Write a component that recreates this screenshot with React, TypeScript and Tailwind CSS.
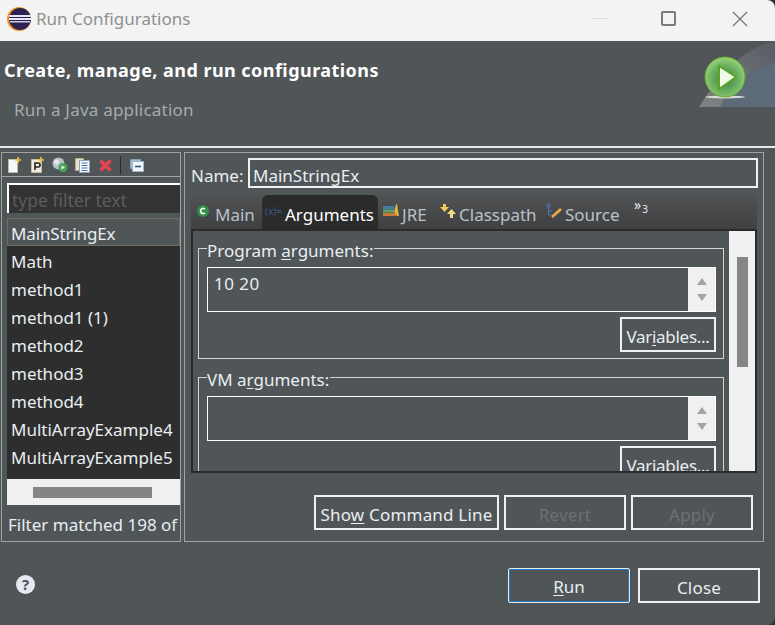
const font = { fontFamily: '"Noto Sans", sans-serif' };

const configs = [
  "Math",
  "method1",
  "method1 (1)",
  "method2",
  "method3",
  "method4",
  "MultiArrayExample4",
  "MultiArrayExample5",
  "MultiCatchExample",
];

function EclipseLogo() {
  return (
    <svg width="24" height="24" viewBox="0 0 24 24">
      <circle cx="12" cy="12" r="12" fill="#f7941e" />
      <circle cx="13" cy="12" r="11" fill="#2c2255" />
      <rect x="2" y="8" width="22" height="2" fill="#e8e6f2" />
      <rect x="2" y="11" width="22" height="2" fill="#e8e6f2" />
      <rect x="3" y="14" width="20" height="1.5" fill="#cfcbe4" />
    </svg>
  );
}

function PlayBanner() {
  return (
    <svg width="76" height="66" viewBox="0 0 76 66" className="block">
      <defs>
        <radialGradient id="ball" cx="0.5" cy="0.55" r="0.6">
          <stop offset="0" stopColor="#3f7a4a" />
          <stop offset="0.6" stopColor="#6fb463" />
          <stop offset="1" stopColor="#a6dc82" />
        </radialGradient>
        <linearGradient id="swoosh" x1="0" y1="1" x2="1" y2="0">
          <stop offset="0" stopColor="#7f8385" />
          <stop offset="1" stopColor="#565c62" />
        </linearGradient>
      </defs>
      <path d="M0 66 C16 42 36 10 76 0 V66 Z" fill="url(#swoosh)" />
      <path d="M21 66 C32 42 52 27 76 22 V66 Z" fill="#5d6a78" />
      <ellipse cx="26" cy="56" rx="20" ry="1.5" fill="#d8dcd8" />
      <circle cx="26" cy="36" r="20" fill="url(#ball)" stroke="#6aa82e" strokeWidth="1" />
      <path d="M20 25 L37 36 L20 48 Z" fill="#f2fbea" stroke="#5aa525" strokeWidth="2" />
    </svg>
  );
}

function ToolIcons() {
  return (
    <div className="flex items-center h-[24px] pl-[6px]">
      <svg width="13" height="16" viewBox="0 0 13 16">
        <path d="M0.5 2.5H9.5V15.5H0.5Z" fill="#f4f7fb" stroke="#c2bda5" />
        <path d="M10 0V6M7 3H13" stroke="#eec64a" strokeWidth="1.6" />
      </svg>
      <svg width="14" height="16" viewBox="0 0 14 16" className="ml-[10px]">
        <path d="M0.5 2.5H10.5V15.5H0.5Z" fill="#f0ede0" stroke="#c2bda5" />
        <path d="M4 13V6H7.5Q9 6 9 8T7.5 10H4" fill="none" stroke="#222" strokeWidth="1.6" />
        <path d="M10 0V6M7 3H13" stroke="#eec64a" strokeWidth="1.6" />
      </svg>
      <svg width="16" height="16" viewBox="0 0 16 16" className="ml-[7px]">
        <circle cx="6.5" cy="6.5" r="6" fill="#b8c0c8" />
        <circle cx="4.5" cy="5" r="2.5" fill="#e4e8ec" />
        <path d="M0 12L4 15" stroke="#3d5f8a" strokeWidth="1.6" />
        <circle cx="11" cy="10.5" r="4.5" fill="#4ba35a" />
        <path d="M9.5 8.5L13 10.5L9.5 12.5Z" fill="#e6f5e6" />
      </svg>
      <svg width="15" height="15" viewBox="0 0 15 15" className="ml-[7px]">
        <path d="M0.5 0.5H8.5V12.5H0.5Z" fill="#e8e3cc" stroke="#b6ad86" />
        <path d="M4.5 2.5H14.5V14.5H4.5Z" fill="#f4f7fb" stroke="#8fa0b8" />
        <path d="M6.5 5H12.5M6.5 7.5H12.5M6.5 10H12.5M6.5 12.5H12.5" stroke="#4f74ac" />
      </svg>
      <svg width="13" height="13" viewBox="0 0 13 13" className="ml-[9px]">
        <path d="M1.5 1.5L11.5 11.5M11.5 1.5L1.5 11.5" stroke="#e6434d" strokeWidth="3.6" />
      </svg>
      <div className="ml-[8px] h-[18px] w-[1px] bg-[#2a2a2a]" />
      <svg width="14" height="13" viewBox="0 0 14 13" className="ml-[9px]">
        <path d="M0.5 0.5H10.5V9.5H0.5Z" fill="#9cc0d8" stroke="#8aa0b0" />
        <path d="M2.5 2.5H13.5V12.5H2.5Z" fill="#f1f6fa" stroke="#9fb7c8" />
        <path d="M5 7.5H11" stroke="#27577d" strokeWidth="1.6" />
      </svg>
    </div>
  );
}

function SpinArrows() {
  return (
    <div className="w-[27px] shrink-0 bg-[#f0f0f0] flex flex-col items-center justify-center gap-[9px]">
      <svg width="10" height="7" viewBox="0 0 10 7">
        <path d="M5 0L10 7H0Z" fill="#a3a3a3" />
      </svg>
      <svg width="10" height="7" viewBox="0 0 10 7">
        <path d="M5 7L10 0H0Z" fill="#a3a3a3" />
      </svg>
    </div>
  );
}

function ActionButton({
  width,
  disabled,
  children,
}: {
  width: string;
  disabled?: boolean;
  children: React.ReactNode;
}) {
  return (
    <div
      className={`${width} h-[35px] shrink-0 border-2 border-[#f0f0f0] flex items-center justify-center pt-[4px] text-[17px] tracking-[0.2px] ${
        disabled ? "text-[#6d7072]" : "text-[#e8eef2]"
      }`}
    >
      {children}
    </div>
  );
}

function ArgumentGroup({
  legend,
  value,
  className,
}: {
  legend: React.ReactNode;
  value?: string;
  className: string;
}) {
  return (
    <fieldset className={`border border-[#d4d6d6] mx-[5px] pl-[8px] pr-[7px] ${className}`}>
      <legend className="pt-[6px] pr-[1px] text-[17px] leading-[18px] text-[#e8eef2]">{legend}</legend>
      <div className="flex h-[45px] mt-[7px] border border-white">
        <div className="flex-1 px-[6px] text-[17px] tracking-[0.5px] leading-[32px] text-[#e8eef2]">{value}</div>
        <SpinArrows />
      </div>
      <div className="flex justify-end mt-[5px] mb-[6px]">
        <ActionButton width="w-[96px]">
          <span className="tracking-[-0.3px]">
            Var<span className="underline underline-offset-2">i</span>ables...
          </span>
        </ActionButton>
      </div>
    </fieldset>
  );
}

function TabLabel({
  icon,
  label,
  className,
  active,
}: {
  icon: React.ReactNode;
  label: string;
  className: string;
  active?: boolean;
}) {
  return (
    <div
      className={`h-[34px] flex items-center gap-[3px] text-[17px] whitespace-nowrap ${className} ${
        active ? "bg-[#2b2b2b] text-white rounded-t-[6px]" : "text-[#b9c2c8]"
      }`}
    >
      {icon}
      <span className="mt-[6px]">{label}</span>
    </div>
  );
}

export default function App() {
  return (
    <div className="w-[775px] h-[625px] overflow-hidden bg-[#2e3032]" style={font}>
      <div className="h-[41px] bg-[#f3f3f3] rounded-tr-[8px] flex items-center pl-[7px] pb-[4px]">
        <EclipseLogo />
        <span className="ml-[5px] text-[17px] text-[#8f8f8f]">Run Configurations</span>
        <div className="ml-auto flex items-center">
          <div className="w-[15px] h-[1px] bg-[#dcdcdc]" />
          <div className="ml-[54px] w-[15px] h-[15px] border-2 border-[#7a7a7a] rounded-[2px]" />
          <svg width="16" height="16" viewBox="0 0 16 16" className="ml-[56px] mr-[27px]">
            <path d="M1 1L15 15M15 1L1 15" stroke="#777" strokeWidth="1.3" />
          </svg>
        </div>
      </div>

      <div className="h-[584px] bg-[#505558] rounded-br-[8px] flex flex-col">
        <div className="h-[105px] flex justify-between shrink-0">
          <div>
            <div className="mt-[17px] ml-[4px] text-[18px] tracking-[0.45px] leading-[24px] font-bold text-white">
              Create, manage, and run configurations
            </div>
            <div className="mt-[16px] ml-[14px] text-[17px] tracking-[0.22px] leading-[24px] text-[#a6abad]">
              Run a Java application
            </div>
          </div>
          <PlayBanner />
        </div>

        <div className="h-[2px] bg-[#e6e7e7] shrink-0" />

        <div className="flex mt-[4px] h-[390px] shrink-0">
          <aside className="ml-[1px] w-[180px] shrink-0 border border-[#a0a3a4] flex flex-col overflow-hidden">
            <div className="h-[24px] border-b border-[#a0a3a4] shrink-0">
              <ToolIcons />
            </div>
            <div className="ml-[5px] mt-[6px] h-[30px] shrink-0 bg-[#333333] border-t-2 border-l-2 border-white pl-[3px] text-[17.5px] leading-[30px] text-[#5c5c5c] whitespace-nowrap">
              type filter text
            </div>
            <div className="ml-[5px] mt-[5px] h-[261px] shrink-0 bg-[#2e2e2e] overflow-hidden text-[17px] text-[#e8eef2]">
              <div className="h-[28px] bg-[#505558] border border-[#6e6e62] leading-[30px] pl-[3px] tracking-[-0.15px]">MainStringEx</div>
              {configs.map((name) => (
                <div key={name} className="h-[28px] leading-[32px] pl-[4px] whitespace-nowrap">
                  {name}
                </div>
              ))}
            </div>
            <div className="ml-[5px] h-[26px] shrink-0 bg-[#f0f0f0] flex items-center pl-[26px]">
              <div className="w-[119px] h-[11px] bg-[#858585]" />
            </div>
            <div className="ml-[6px] mt-[6px] text-[17px] leading-[28px] text-[#e8eef2] whitespace-nowrap">
              Filter matched 198 of
            </div>
          </aside>

          <main className="ml-[3px] w-[580px] shrink-0 border border-[#a0a3a4] flex flex-col">
            <div className="flex items-center h-[30px] mt-[5px] ml-[6px] shrink-0">
              <span className="w-[57px] shrink-0 pt-[5px] text-[17px] text-[#e8eef2]">Name:</span>
              <div className="w-[510px] h-[30px] border-2 border-[#f0f0f0] pl-[3px] text-[17px] leading-[32px] text-[#e8eef2]">
                MainStringEx
              </div>
            </div>

            <div className="mt-[7px] ml-[6px] w-[566px] h-[278px] shrink-0 flex flex-col">
              <div className="h-[34px] shrink-0 bg-[linear-gradient(#505254,#3f4042)] rounded-t-[6px] flex items-stretch">
                <TabLabel
                  className="w-[71px] pl-[6px]"
                  label="Main"
                  icon={
                    <svg width="12" height="12" viewBox="0 0 12 12" className="mb-[3px] mr-[3px]">
                      <circle cx="6" cy="6" r="6" fill="#2f8f46" />
                      <path d="M8 4.2Q6 2.6 4.4 4T4.4 8Q6 9.4 8 7.8" fill="none" stroke="#fff" strokeWidth="1.6" />
                    </svg>
                  }
                />
                <TabLabel
                  active
                  className="w-[116px] pl-[3px]"
                  label="Arguments"
                  icon={
                    <span className="inline-block w-[17px] shrink-0 mb-[3px] text-[10px] leading-none text-[#3a5a8a]">
                      (x)=
                    </span>
                  }
                />
                <TabLabel
                  className="ml-[5px] w-[57px]"
                  label="JRE"
                  icon={
                    <svg width="16" height="13" viewBox="0 0 16 13" className="shrink-0 mb-[3px]">
                      <rect y="2" width="11" height="3" fill="#3f7f9f" />
                      <rect y="5.5" width="11" height="3" fill="#5f9f6f" />
                      <rect y="9" width="13" height="3" fill="#c87a3a" />
                      <path d="M11 8L13 0H14L16 12H14Z" fill="#e0b040" />
                    </svg>
                  }
                />
                <TabLabel
                  className="w-[106px]"
                  label="Classpath"
                  icon={
                    <svg width="16" height="14" viewBox="0 0 16 14" className="shrink-0 mb-[3px]">
                      <path d="M3 0H6V3H9L4.5 8L0 3H3Z" fill="#f0cc55" />
                      <path d="M10 14H13V10H16L11.5 5L7 10H10Z" fill="#f5dc7a" />
                    </svg>
                  }
                />
                <TabLabel
                  className="w-[88px]"
                  label="Source"
                  icon={
                    <svg width="16" height="16" viewBox="0 0 16 16" className="shrink-0 mb-[3px]">
                      <path d="M1 1H4V4H1ZM2.5 4V12H6M2.5 8H6" fill="none" stroke="#4f74c0" />
                      <path d="M6 14L15 6" stroke="#eaa84a" strokeWidth="2.6" />
                    </svg>
                  }
                />
                <span className="mt-[2px] text-[14px] leading-[16px] text-[#e8eef2]">
                  »<span className="ml-[1px] text-[10px] leading-none align-[-3px]">3</span>
                </span>
              </div>

              <div className="h-[244px] shrink-0 border-2 border-[#2b2b2b] flex overflow-hidden">
                <div className="flex-1 pt-[5px] overflow-hidden">
                  <ArgumentGroup
                    className="h-[123px]"
                    value="10 20"
                    legend={
                      <span>
                        Program <span className="underline underline-offset-2">a</span>rguments:
                      </span>
                    }
                  />
                  <ArgumentGroup
                    className="mt-[6px]"
                    legend={
                      <span>
                        VM a<span className="underline underline-offset-2">r</span>guments:
                      </span>
                    }
                  />
                </div>
                <div className="w-[26px] shrink-0 bg-[#f0f0f0] pt-[26px] pl-[8px]">
                  <div className="w-[11px] h-[110px] bg-[#858585]" />
                </div>
              </div>
            </div>

            <div className="flex justify-end gap-[5px] mt-[22px] mr-[10px]">
              <ActionButton width="w-[185px]">
                <span>
                  Sho<span className="underline underline-offset-2">w</span> Command Line
                </span>
              </ActionButton>
              <ActionButton width="w-[122px]" disabled>
                Revert
              </ActionButton>
              <ActionButton width="w-[122px]" disabled>
                Apply
              </ActionButton>
            </div>
          </main>
        </div>

        <div className="flex items-center mt-[26px]">
          <div className="ml-[16px] mb-[2px] w-[19px] h-[19px] rounded-full bg-[#e6e9f0] flex items-center justify-center text-[15px] font-bold text-[#4a5058]">
            ?
          </div>
          <div className="ml-auto flex gap-[8px] mr-[15px]">
            <div className="w-[122px] h-[35px] border border-[#e8e8e8] rounded-[2px] shadow-[inset_0_0_0_1px_#1f78c8] flex items-center justify-center pt-[3px] text-[17px] text-[#e8eef2]">
              <span>
                <span className="underline underline-offset-2">R</span>un
              </span>
            </div>
            <ActionButton width="w-[122px]">Close</ActionButton>
          </div>
        </div>
      </div>
    </div>
  );
}
